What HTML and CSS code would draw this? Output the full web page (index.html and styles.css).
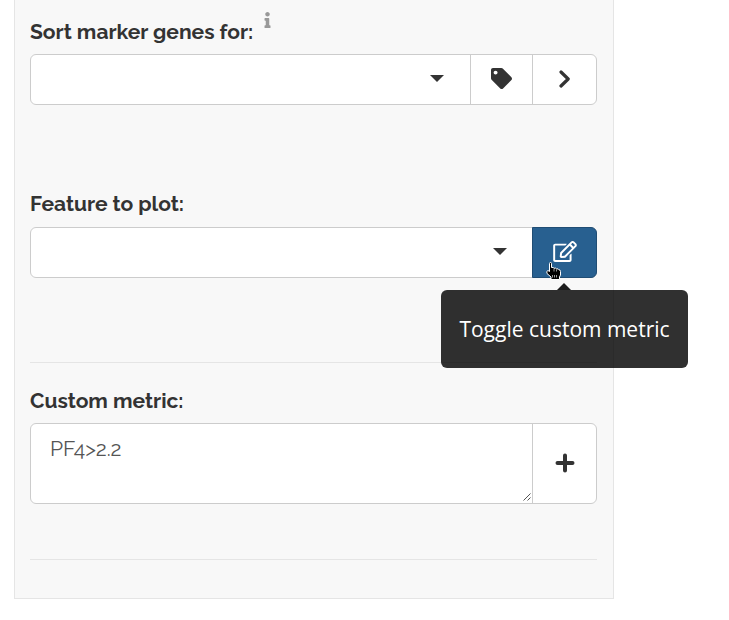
FILE: index.html
```html
<!DOCTYPE html>
<html lang="en">
<head>
<meta charset="utf-8">
<title>Marker genes</title>
<link rel="stylesheet" href="styles.css">
</head>
<body>
<form class="panel">
  <div class="group markers">
    <div class="label-row">
      <label class="label sort">Sort marker genes for:</label>
      <svg class="info" viewBox="0 0 192 512"><path d="M20 424.229h20V279.771H20c-11.046 0-20-8.954-20-20V212c0-11.046 8.954-20 20-20h112c11.046 0 20 8.954 20 20v212.229h20c11.046 0 20 8.954 20 20V492c0 11.046-8.954 20-20 20H20c-11.046 0-20-8.954-20-20v-47.771c0-11.046 8.954-20 20-20zM96 0C56.235 0 24 32.235 24 72s32.235 72 72 72 72-32.235 72-72S135.764 0 96 0z"/></svg>
    </div>
    <div class="input-group">
      <div class="select"><span class="caret"></span></div>
      <button type="button" class="btn narrow"><svg class="tag" viewBox="0 0 512 512"><path d="M0 252.118V48C0 21.49 21.49 0 48 0h204.118a48 48 0 0 1 33.941 14.059l211.882 211.882c18.745 18.745 18.745 49.137 0 67.882L293.823 497.941c-18.745 18.745-49.137 18.745-67.882 0L14.059 286.059A48 48 0 0 1 0 252.118zM112 64c-26.51 0-48 21.49-48 48s21.49 48 48 48 48-21.49 48-48-21.49-48-48-48z"/></svg></button>
      <button type="button" class="btn"><svg class="chevron" viewBox="0 0 12 18"><path d="M2 2l7.200 7L2 16"/></svg></button>
    </div>
  </div>
  <div class="group feature">
    <div class="label-row"><label class="label">Feature to plot:</label></div>
    <div class="input-group">
      <div class="select"><span class="caret"></span></div>
      <button type="button" class="btn active">
        <svg class="edit" viewBox="0 0 576 512"><path d="M402.3 344.9l32-32c5-5 13.7-1.5 13.7 5.7V464c0 26.5-21.5 48-48 48H48c-26.5 0-48-21.5-48-48V112c0-26.5 21.5-48 48-48h273.5c7.1 0 10.7 8.6 5.7 13.7l-32 32c-1.5 1.5-3.5 2.3-5.7 2.3H48v352h352V350.5c0-2.1.8-4.1 2.3-5.6zm156.6-201.8L296.3 405.7l-90.4 10c-26.2 2.9-48.5-19.2-45.6-45.6l10-90.4L432.9 17.1c22.9-22.9 59.9-22.9 82.7 0l43.2 43.2c22.9 22.9 22.9 60 .1 82.8zM460.1 174L402 115.9 216.2 301.8l-7.3 65.3 65.3-7.3L460.1 174zm64.8-79.7l-43.2-43.2c-4.1-4.1-10.8-4.1-14.8 0L436 82l58.1 58.1 30.9-30.9c4-4.2 4-10.8-.1-14.9z"/></svg>
        <svg class="pointer" viewBox="0 0 16 18"><path d="M3.500 1.500Q3.500.5 4.500.5T5.500 1.500V5.500q2-.5 2.500.8 2-.6 2.500.5 2-.3 2.500 1 1.500 0 1.500 1.700V13l-1 2v2.500H5V15L1 11.500Q0 9 2 8.500l1.500 1z"/><path class="fingers" d="M8 7v2.500M10.500 7.500v2M6.500 13v2.500M8.500 13v2.500M10.500 13v2.500"/></svg>
      </button>
      <div class="tooltip">Toggle custom metric</div>
    </div>
  </div>
  <hr>
  <div class="group custom">
    <div class="label-row"><label class="label">Custom metric:</label></div>
    <div class="input-group tall">
      <div class="textarea">PF4&gt;2.2
        <svg class="grip" viewBox="0 0 8 8"><path d="M.5 7.500l7-7M4.500 7.500l3-3"/></svg>
      </div>
      <button type="button" class="btn"><svg class="plus" viewBox="0 0 20 20"><path d="M10 2.500v15M2.500 10h15"/></svg></button>
    </div>
  </div>
  <hr>
</form>
</body>
</html>
```
FILE: styles.css
```css
* { box-sizing: border-box; }
body { margin: 0; background: #fff; color: #333; font-family: Raleway, Lato, sans-serif; }
.panel {
  width: 600px;
  height: 599px;
  margin-left: 14px;
  padding: 16px 16px 0 15px;
  background: #f8f8f8;
  border: 1px solid #e5e5e5;
  border-top: 0;
}
.label-row { display: flex; height: 30px; margin-bottom: 8px; }
.label { font-size: 21px; font-weight: 700; line-height: 30px; white-space: nowrap; }
.sort { width: 234px; line-height: 32px; }
.info { width: 7px; height: 16px; margin-top: -4px; fill: #999; }
.input-group {
  position: relative;
  display: flex;
  width: 567px;
  height: 51px;
  background: #fff;
  border: 1px solid #ccc;
  border-radius: 6px;
}
.custom .label-row { margin-bottom: 7px; }
.tall { height: 81px; }
.select { flex: 1; display: flex; align-items: center; justify-content: flex-end; padding: 0 26px 2px 0; }
.caret { border: 7.500px solid transparent; border-top: 7px solid #333; border-bottom: 0; }
.btn {
  display: flex;
  align-items: center;
  justify-content: center;
  width: 64px;
  padding: 0 0 2px;
  background: none;
  border: 0;
  border-left: 1px solid #ccc;
}
.narrow { width: 62px; }
.active {
  position: relative;
  width: 65px;
  margin: -1px;
  padding-bottom: 3px;
  background: #286090;
  border: 1px solid #204d74;
  border-radius: 0 6px 6px 0;
}
.tag { width: 21px; height: 21px; fill: #333; }
.chevron { width: 12px; height: 18px; fill: none; stroke: #333; stroke-width: 3.200; stroke-linecap: round; stroke-linejoin: round; }
.edit { width: 24px; height: 21px; fill: #fff; }
.plus { width: 20px; height: 20px; fill: none; stroke: #333; stroke-width: 4; stroke-linecap: round; }
.pointer { position: absolute; left: 13px; top: 34px; width: 16px; height: 18px; fill: #000; stroke: #fff; }
.fingers { stroke: #fff; stroke-width: .6; }
.tooltip {
  position: absolute;
  z-index: 2;
  left: 410px;
  top: 62px;
  width: 247px;
  height: 78px;
  color: #fff;
  background: rgba(0, 0, 0, .81);
  border-radius: 6px;
  font: 21px/78px "Open Sans", "Noto Sans", sans-serif;
  text-align: center;
  white-space: nowrap;
}
.tooltip::before {
  content: "";
  position: absolute;
  left: 116px;
  top: -7px;
  border: 7.500px solid transparent;
  border-top: 0;
  border-bottom: 7px solid #1c1c1c;
}
.feature { margin-top: 84px; }
hr { height: 1px; margin: 84px 0 23px; border: 0; background: #e5e5e5; }
.custom + hr { margin: 55px 0 0; }
.textarea { position: relative; flex: 1; padding: 10px 19px; font-size: 21px; line-height: 30px; letter-spacing: -.1px; color: #555; }
.grip { position: absolute; right: 1px; bottom: 2px; width: 8px; height: 8px; fill: none; stroke: #555; }
```
